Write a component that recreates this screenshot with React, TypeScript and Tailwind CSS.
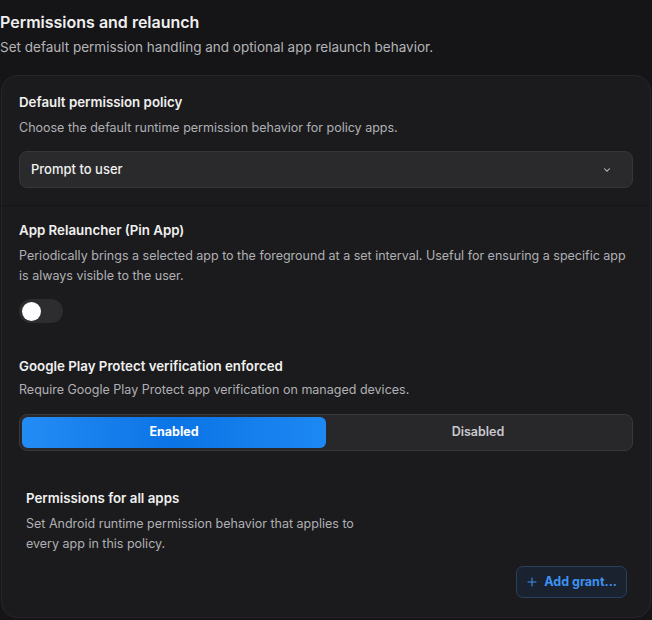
import React from "react";

export default function App() {
  return (
    <div
      className="w-[652px] h-[620px] bg-[#151517] text-[#ececec] overflow-hidden"
      style={{ fontFamily: "Inter, 'Noto Sans', sans-serif" }}
    >
      <div className="pt-[12px]">
        <h2 className="text-[16px] leading-[20px] font-semibold text-[#f0f0f0]">Permissions and relaunch</h2>
        <p className="mt-[5px] text-[13.5px] leading-[20px] text-[#b4b4b8]">
          Set default permission handling and optional app relaunch behavior.
        </p>
      </div>
      <div className="mt-[18px] mx-[1px] rounded-[16px] border border-[#26262a] bg-[#1b1b1d] h-[543px] overflow-hidden">
        <div className="px-[17px] pt-[17px] pb-[17px] border-b border-[#141416]">
          <div className="text-[13.3px] leading-[18px] font-semibold text-[#f0f0f0]">Default permission policy</div>
          <div className="mt-[8px] text-[12.5px] leading-[18px] text-[#b0b0b4]">
            Choose the default runtime permission behavior for policy apps.
          </div>
          <div className="mt-[14px] h-[37px] rounded-[8px] border border-[#36363a] bg-[#2a2a2d] flex items-center justify-between pl-[11px] pr-[20px]">
            <span className="text-[13px] font-medium text-[#f0f0f0]">Prompt to user</span>
            <svg width="10" height="10" viewBox="0 0 24 24" fill="none" stroke="#cfcfd3" strokeWidth="2.5" strokeLinecap="round" strokeLinejoin="round">
              <path d="m6 9 6 6 6-6" />
            </svg>
          </div>
        </div>
        <div className="px-[17px] pt-[15px]">
          <div className="text-[13.3px] leading-[18px] font-semibold text-[#f0f0f0]">App Relauncher (Pin App)</div>
          <div className="mt-[7px] text-[12.5px] leading-[20px] text-[#b0b0b4]">
            Periodically brings a selected app to the foreground at a set interval. Useful for ensuring a specific app is always visible to the user.
          </div>
          <div className="mt-[13px] w-[44px] h-[24px] rounded-full bg-[#2d2d30] flex items-center px-[3px]">
            <div className="w-[19px] h-[19px] rounded-full bg-white" />
          </div>
          <div className="mt-[34px] text-[13.3px] leading-[18px] font-semibold text-[#f0f0f0]">
            Google Play Protect verification enforced
          </div>
          <div className="mt-[6px] text-[12.5px] leading-[18px] text-[#b0b0b4]">
            Require Google Play Protect app verification on managed devices.
          </div>
          <div className="mt-[15px] h-[37px] rounded-[8px] border border-[#38383c] bg-[#28282b] flex p-[2px]">
            <div className="flex-1 rounded-[6px] bg-gradient-to-r from-[#238cf4] via-[#0b74e6] to-[#1d89f4] flex items-center justify-center text-[12.5px] font-bold text-white">
              Enabled
            </div>
            <div className="flex-1 flex items-center justify-center text-[12.5px] font-semibold text-[#c8c8cc]">
              Disabled
            </div>
          </div>
        </div>
        <div className="pl-[24px] pr-[23px] pt-[38px]">
          <div className="text-[13.3px] leading-[18px] font-semibold text-[#f0f0f0]">Permissions for all apps</div>
          <div className="mt-[7px] max-w-[345px] text-[12.5px] leading-[20px] text-[#b0b0b4]">
            Set Android runtime permission behavior that applies to every app in this policy.
          </div>
          <div className="mt-[12px] flex justify-end">
            <button className="h-[32px] px-[9px] rounded-[7px] border border-[#28405e] bg-[#1a2230] flex items-center gap-[6px] text-[12.5px] font-bold text-[#3d92f2]">
              <svg width="12" height="12" viewBox="0 0 24 24" fill="none" stroke="#3d92f2" strokeWidth="2" strokeLinecap="round">
                <path d="M12 4v16M4 12h16" />
              </svg>
              Add grant...
            </button>
          </div>
        </div>
      </div>
    </div>
  );
}
